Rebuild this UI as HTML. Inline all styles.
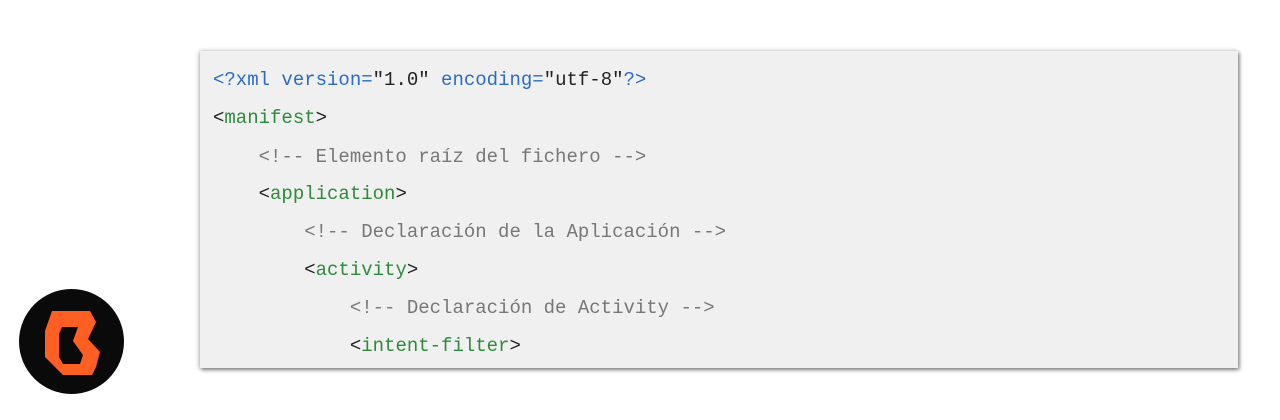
<!DOCTYPE html>
<html><head><meta charset="utf-8"><style>
html,body{margin:0;padding:0;background:#fff;width:1280px;height:420px;overflow:hidden;position:relative}
.box{position:absolute;left:200px;top:51px;width:1038px;height:317px;background:#f0f0f0;box-shadow:0 1px 5px rgba(0,0,0,.45),2px 2px 3px rgba(0,0,0,.25)}
.code{position:absolute;left:213px;top:1px;font-family:"Liberation Mono",monospace;font-size:19px;color:#222;white-space:pre}
.l{position:absolute;left:0;height:20px;line-height:20px}
.b{color:#2a6bc4}.g{color:#2f8a3c}.c{color:#777}.k{color:#222}
</style></head><body>
<div class="box"></div>
<div class="code">
<div class="l" style="top:69px"><span class="b">&lt;?xml version=</span><span class="k">"1.0"</span><span class="b"> encoding=</span><span class="k">"utf-8"</span><span class="b">?&gt;</span></div>
<div class="l" style="top:107px">&lt;<span class="g">manifest</span>&gt;</div>
<div class="l c" style="top:146px">    &lt;!-- Elemento raíz del fichero --&gt;</div>
<div class="l" style="top:183px">    &lt;<span class="g">application</span>&gt;</div>
<div class="l c" style="top:221px">        &lt;!-- Declaración de la Aplicación --&gt;</div>
<div class="l" style="top:259px">        &lt;<span class="g">activity</span>&gt;</div>
<div class="l c" style="top:297px">            &lt;!-- Declaración de Activity --&gt;</div>
<div class="l" style="top:335px">            &lt;<span class="g">intent-filter</span>&gt;</div>
</div>
<svg style="position:absolute;left:0;top:0" width="200" height="420">
<circle cx="71.5" cy="341.5" r="52.5" fill="#0a0a0a"/>
<path fill="#ff5f23" fill-rule="evenodd" d="M52 311 L90 311 L96 322 L88 339 L100 352 L96 367 L92 375 L63 375 L45 357 L45 331 Z M62 327 L78 327 L73 341 L83 355 L80 364 L63 364 L59 357 L59 334 Z"/>
</svg>
</body></html>
